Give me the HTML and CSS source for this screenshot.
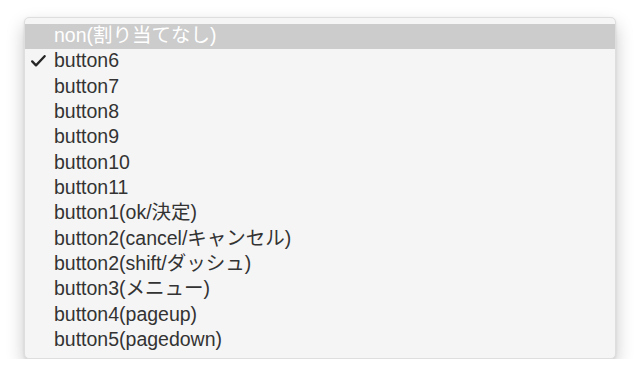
FILE: index.html
```html
<!DOCTYPE html>
<html lang="ja">
<head>
    <meta charset="UTF-8">
    <title>ボタン割り当て</title>
    <link rel="stylesheet" href="styles.css">
</head>
<body>
    <div class="menu">
        <div class="menu-item highlighted">non(割り当てなし)</div>
        <div class="menu-item">
            <svg class="check" width="15" height="12" viewBox="0 0 15 12">
                <path d="M1.2 6.4 L5 10.4 L13.6 1.2" fill="none" stroke="#262626" stroke-width="2.3" stroke-linecap="round" stroke-linejoin="round"/>
            </svg>
            button6
        </div>
        <div class="menu-item">button7</div>
        <div class="menu-item">button8</div>
        <div class="menu-item">button9</div>
        <div class="menu-item">button10</div>
        <div class="menu-item">button11</div>
        <div class="menu-item">button1(ok/決定)</div>
        <div class="menu-item">button2(cancel/キャンセル)</div>
        <div class="menu-item">button2(shift/ダッシュ)</div>
        <div class="menu-item">button3(メニュー)</div>
        <div class="menu-item">button4(pageup)</div>
        <div class="menu-item">button5(pagedown)</div>
    </div>
</body>
</html>
```

FILE: styles.css
```css
* { margin: 0; padding: 0; box-sizing: border-box; }
body {
    font-family: "Liberation Sans", "Noto Sans CJK JP", sans-serif;
    background: #ffffff;
    color: #333333;
    padding: 17px 24px 0 24px;
}
.menu {
    width: 592px;
    height: 342px;
    background: #f5f5f5;
    border-radius: 5px;
    border: 1px solid #dedede;
    padding: 6px 0 4px 0;
    box-shadow: 0 8px 18px rgba(0, 0, 0, 0.22), 0 1px 3px rgba(0, 0, 0, 0.08);
}
.menu-item {
    position: relative;
    height: 25.33px;
    line-height: 22px;
    padding-left: 29px;
    font-size: 19.5px;
    white-space: nowrap;
}
.menu-item.highlighted {
    background: #cccccc;
    color: #ffffff;
}
.check {
    position: absolute;
    left: 6px;
    top: 6px;
}
```
